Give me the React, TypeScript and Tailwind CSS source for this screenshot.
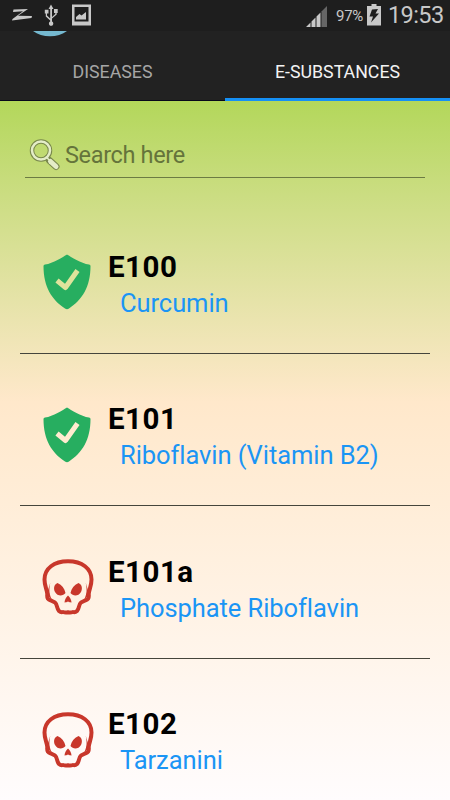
import React from 'react';

type Substance = {
  code: string;
  name: string;
  safe: boolean;
};

const substances: Substance[] = [
  { code: 'E100', name: 'Curcumin', safe: true },
  { code: 'E101', name: 'Riboflavin (Vitamin B2)', safe: true },
  { code: 'E101a', name: 'Phosphate Riboflavin', safe: false },
  { code: 'E102', name: 'Tarzanini', safe: false },
];

function ShieldIcon({ tick }: { tick: string }) {
  return (
    <svg viewBox="0 0 48 56" className="w-12 h-14 shrink-0">
      <path
        d="M24 0.500C20 3 10 9.500 2 10.500Q0.500 10.700 0.500 12C0.500 33 9 46 22 54.500Q24 55.800 26 54.500C39 46 47.500 33 47.500 12Q47.500 10.700 46 10.500C38 9.500 28 3 24 0.500Z"
        fill="#27ae60"
      />
      <path d="M14 26.500L22.500 33.500L34.500 16.500" fill="none" stroke={tick} strokeWidth="5" strokeLinejoin="round" />
    </svg>
  );
}

function SkullIcon() {
  return (
    <svg viewBox="0 0 52 56" className="w-[52px] h-14 shrink-0">
      <path
        d="M26 2.300C12 2.300 2.500 9.500 2.500 20.500C2.500 27 4.800 30 5.300 35C4.800 39.500 6 40.500 9 41.500L13 43.500C15.500 45.500 14.500 49.500 17 52Q19 53.800 21 53Q23.500 54 26 53.300Q28.500 54 31 53Q33 53.800 35 52C37.500 49.500 36.500 45.500 39 43.500L43 41.500C46 40.500 47.200 39.500 46.700 35C47.200 30 49.500 27 49.500 20.500C49.500 9.500 40 2.300 26 2.300Z"
        fill="none"
        stroke="#c8372b"
        strokeWidth="4"
        strokeLinejoin="round"
      />
      <path d="M8.300 23.500L5.500 33L7 38L9.500 40C6.800 34 7 30 8.300 23.500ZM43.700 23.500L46.500 33L45 38L42.500 40C45.200 34 45 30 43.700 23.500Z" fill="#c8372b" />
      <path
        d="M15.500 24C20 26 22.500 29.500 23.500 34C21 37.500 15.500 37.500 13 33C11.200 29.500 12 25.500 15.500 24ZM36.500 24C32 26 29.500 29.500 28.500 34C31 37.500 36.500 37.500 39 33C40.800 29.500 40 25.500 36.500 24Z"
        fill="#c8372b"
      />
      <path d="M26 36.500C24 38.500 22.500 41 22.500 43.500L25.500 43L26 42L26.500 43L29.500 43.500C29.500 41 28 38.500 26 36.500Z" fill="#c8372b" />
    </svg>
  );
}

function StatusBar() {
  return (
    <div className="h-[31px] shrink-0 bg-[#1e1e1e] flex items-center justify-between text-[#c8c8c8]">
      <svg viewBox="0 0 100 31" className="w-[100px] h-[31px]" fill="#c8c8c8">
        <path d="M13.500 9.500L28 9L18 15.800L32 16L31.500 18L12 20.500L12.500 19L23 11.300L13 12Z" />
        <path d="M51 4.500L48.500 9H50.200V18.500L47 15.500V13.500H48.500V9.800H44.800V13.500H45.800V16.500L50.200 20.500V21.600A2.200 2.200 0 1 0 52 21.600V18.500L56.700 14.500V13H57.700V9H54V13H55.300V14L52 17V9H53.500Z" />
        <path fillRule="evenodd" d="M72 4.500H91V25.500H72ZM74.500 7V21.500H88.500V7ZM76 19.500V17L79.500 14L81.500 15.500L86 12V19.500Z" />
      </svg>
      <div className="flex items-center">
        <svg viewBox="0 0 22 22" className="w-[22px] h-[22px] mt-0.5 mr-2">
          <path d="M0 21L4.500 16.500V21ZM5.500 15.500L9.500 11.500V21H5.500ZM10.500 10.500L14.500 6.500V21H10.500Z" fill="#c8c8c8" />
          <path d="M15.500 5.500L21 0V21H15.500Z" fill="#666" />
        </svg>
        <span className="w-[31px] text-[15px] leading-5 tracking-[-0.300px]">97%</span>
        <svg viewBox="0 0 14 22" className="w-3.5 h-[22px] -mt-0.5">
          <path d="M4.500 0H9.500V2H14V21.500H0V2H4.500Z" fill="#c8c8c8" />
          <path d="M5 5.500L11 5L8.500 9.500H12L4 18.500L6 12.500H2.500Z" fill="#1e1e1e" />
        </svg>
        <span className="w-[69px] pl-[7px] -mt-px text-[23.500px] leading-7 tracking-[-0.600px] whitespace-nowrap">19:53</span>
      </div>
    </div>
  );
}

export default function App() {
  return (
    <div className="w-[450px] h-[800px] overflow-hidden flex flex-col bg-[#222222] font-[Roboto,sans-serif]">
      <StatusBar />

      {/* only the bottom of the app logo is left while the action bar collapses */}
      <div className="h-[13px] shrink-0">
        <svg viewBox="0 0 34 6" className="w-[34px] h-1.5 ml-[33px]">
          <path d="M0 0H34C25 7 9 7 0 0Z" fill="#75b9d0" />
        </svg>
      </div>

      <div className="h-[57px] shrink-0 flex text-[17.800px]">
        <div className="flex-1 flex items-center justify-center pt-px text-[#a6a6a6] border-b border-[#08081a]">
          DISEASES
        </div>
        <div className="flex-1 flex items-center justify-center pt-[3px] text-[#f3f3f3] border-b-[3px] border-[#1590f5]">
          E-SUBSTANCES
        </div>
      </div>

      <div className="flex-1 min-h-0 px-5 bg-linear-to-b from-[#b3d75a] via-[#ffe8cb] via-43% to-[#fffcfd]">
        <div className="mx-[5px] h-[77px] pt-[37px] flex border-b border-[#6c7b43]">
          <svg viewBox="0 0 32 32" className="w-8 h-8 ml-1 mt-px">
            <path d="M20.500 21.500L27 27.500" stroke="#78874c" strokeWidth="7" strokeLinecap="round" />
            <path d="M16 17L21 22" stroke="#78874c" strokeWidth="4" />
            <circle cx="12" cy="11.500" r="9" fill="none" stroke="#78874c" strokeWidth="4.500" />
            <path d="M21.500 22.500L27 27.500" stroke="#e4edc7" strokeWidth="5" strokeLinecap="round" />
            <path d="M17 17.500L21 22" stroke="#e4edc7" strokeWidth="1.500" />
            <circle cx="12" cy="11.500" r="9" fill="none" stroke="#e4edc7" strokeWidth="2.500" />
          </svg>
          <span className="ml-1 pt-px text-[23.500px] leading-8 tracking-[-0.350px] text-[#65743b]">Search here</span>
        </div>

        <div className="pt-[23px]">
          {substances.map((item, i) => (
            <div key={item.code} className="h-[152.670px] pt-[46px] border-b border-[#45453c]">
              <div className="flex">
                <div className="w-[88px] pl-[22px] pt-[7px]">
                  {item.safe ? (
                    <div className="pl-px">
                      <ShieldIcon tick={i === 0 ? '#dfe39c' : '#ffebd0'} />
                    </div>
                  ) : (
                    <SkullIcon />
                  )}
                </div>
                <div className="pt-[1.500px] whitespace-nowrap">
                  <div className="text-[29.500px] leading-9 font-bold tracking-[0.500px] text-black">{item.code}</div>
                  <div className="pl-3 text-[25.500px] leading-[37px] tracking-[-0.070px] text-[#1b95f5]">{item.name}</div>
                </div>
              </div>
            </div>
          ))}
        </div>
      </div>
    </div>
  );
}
